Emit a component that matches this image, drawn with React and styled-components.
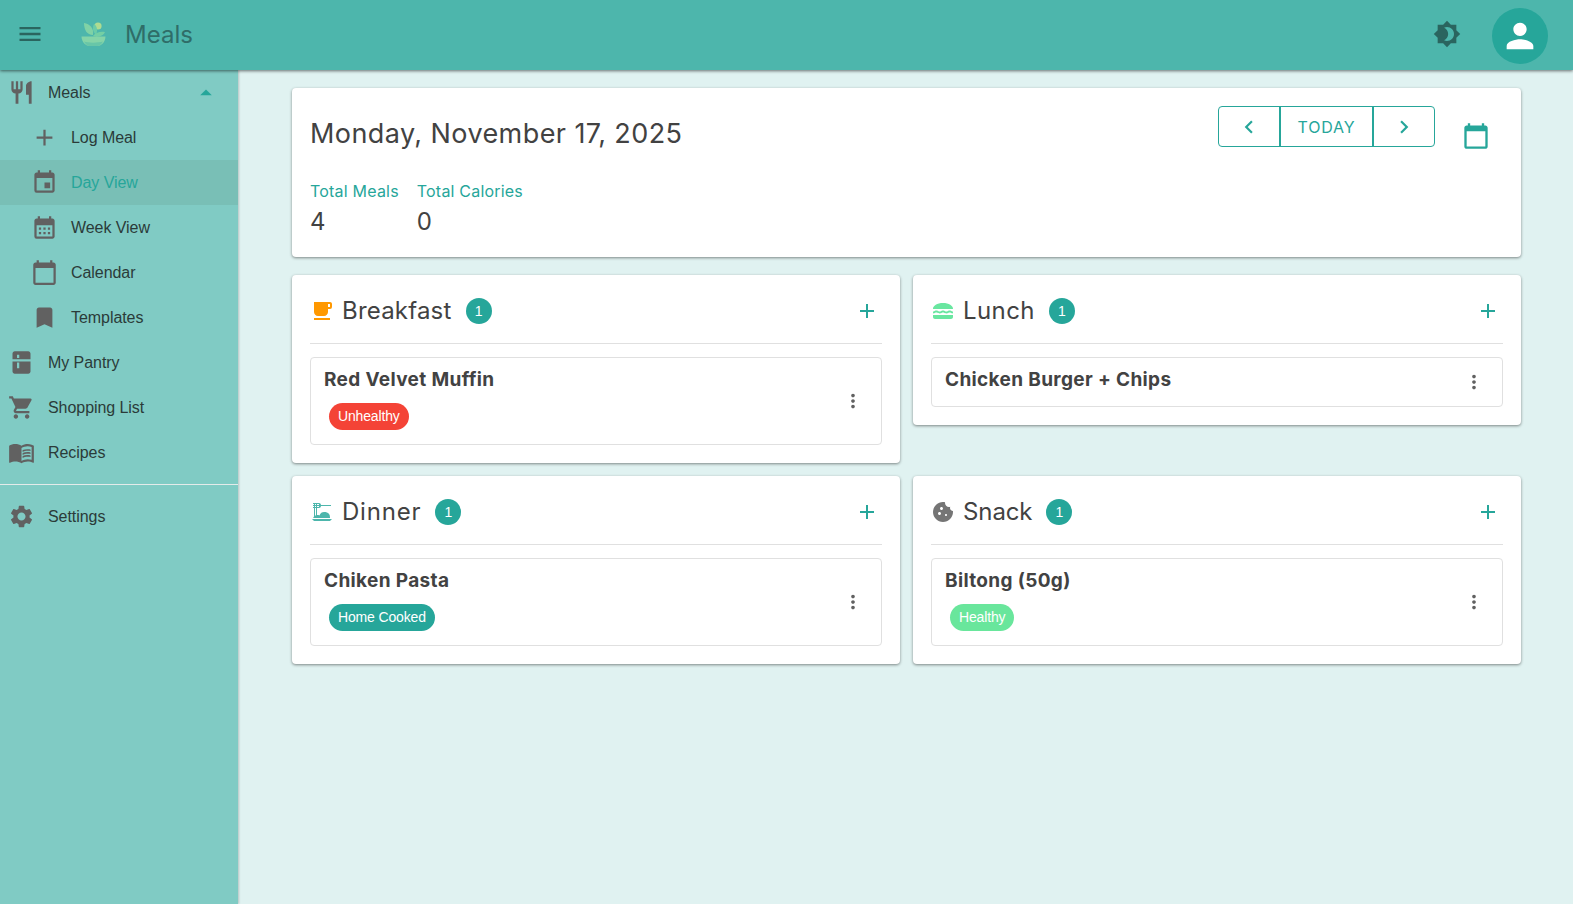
import React from 'react';
import styled, { createGlobalStyle } from 'styled-components';
import {
  MdAdd,
  MdArrowDropUp,
  MdBookmark,
  MdBrightness4,
  MdCalendarMonth,
  MdCalendarToday,
  MdChevronLeft,
  MdChevronRight,
  MdCookie,
  MdDinnerDining,
  MdEvent,
  MdFreeBreakfast,
  MdKitchen,
  MdLunchDining,
  MdMenu,
  MdMenuBook,
  MdMoreVert,
  MdPerson,
  MdRestaurant,
  MdSettings,
  MdShoppingCart,
} from 'react-icons/md';

const GlobalStyle = createGlobalStyle`
  html, body {
    margin: 0;
    padding: 0;
    height: 100%;
    overflow: hidden;
  }
  body {
    background: #e0f2f1;
    font-family: 'Liberation Sans', Arial, sans-serif;
  }
`;

const navItems = [
  { label: 'Meals', icon: MdRestaurant, open: true },
  { label: 'Log Meal', icon: MdAdd, sub: true },
  { label: 'Day View', icon: MdEvent, sub: true, active: true },
  { label: 'Week View', icon: MdCalendarMonth, sub: true },
  { label: 'Calendar', icon: MdCalendarToday, sub: true },
  { label: 'Templates', icon: MdBookmark, sub: true },
  { label: 'My Pantry', icon: MdKitchen },
  { label: 'Shopping List', icon: MdShoppingCart },
  { label: 'Recipes', icon: MdMenuBook },
];

const meals = [
  {
    name: 'Breakfast',
    track: 0.2,
    icon: MdFreeBreakfast,
    color: '#ff9800',
    item: 'Red Velvet Muffin',
    tag: 'Unhealthy',
    tagColor: '#f44336',
  },
  { name: 'Lunch', track: 0.4, icon: MdLunchDining, color: '#69e6a0', item: 'Chicken Burger + Chips' },
  {
    name: 'Dinner',
    track: 0.8,
    icon: MdDinnerDining,
    color: '#4db6ac',
    item: 'Chiken Pasta',
    tag: 'Home Cooked',
    tagColor: '#26a69a',
  },
  {
    name: 'Snack',
    track: -0.1,
    icon: MdCookie,
    color: '#757575',
    item: 'Biltong (50g)',
    tag: 'Healthy',
    tagColor: '#69e69c',
  },
];

function Logo() {
  return (
    <LogoMark width='26' height='26' viewBox='0 0 26 26'>
      <circle cx='17' cy='5' r='3.6' fill='#b9e08f' />
      <path d='M13 3c3 2 4 6 2 11-3-3-4-7-2-11z' fill='#6fcfa8' />
      <path d='M3 2c6 1 10 5 9 12C6 14 3 9 3 2z' fill='#86d6a6' />
      <path d='M12 15c2-3 7-5 12-4-1 3-6 6-12 4z' fill='#79d2a4' />
      <path d='M0.5 15.5h24c0 5-4 9.5-8 9.5h-8c-4 0-8-4.5-8-9.5z' fill='#8cd8a8' />
      <path d='M3 20.5c4 1.5 14 1.5 19 0-1.500 2.700-3.500 4.500-5.500 4.500h-8c-2 0-4-1.800-5.500-4.500z' fill='#6cc8a8' />
    </LogoMark>
  );
}

function MealCard({ meal }) {
  const Icon = meal.icon;
  return (
    <Card>
      <CardHeader>
        <CardTitle>
          <Icon size={24} color={meal.color} />
          <MealName $track={meal.track}>{meal.name}</MealName>
          <Count>1</Count>
        </CardTitle>
        <AddButton>
          <MdAdd size={24} />
        </AddButton>
      </CardHeader>
      <Entry>
        <EntryBody>
          <EntryName>{meal.item}</EntryName>
          {meal.tag && <Tag $color={meal.tagColor}>{meal.tag}</Tag>}
        </EntryBody>
        <MoreButton>
          <MdMoreVert size={22} />
        </MoreButton>
      </Entry>
    </Card>
  );
}

export default function App() {
  return (
    <>
      <GlobalStyle />
      <Page>
        <AppBar>
          <BarLeft>
            <MenuButton>
              <MdMenu size={28} />
            </MenuButton>
            <Logo />
            <AppTitle>Meals</AppTitle>
          </BarLeft>
          <BarRight>
            <MdBrightness4 size={28} color='#2a655f' />
            <Avatar>
              <MdPerson size={40} />
            </Avatar>
          </BarRight>
        </AppBar>
        <Body>
          <Sidebar>
            {navItems.map((item) => {
              const Icon = item.icon;
              return (
                <NavRow key={item.label} $sub={item.sub} $active={item.active}>
                  <NavIcon>
                    <Icon size={27} />
                  </NavIcon>
                  <NavLabel>{item.label}</NavLabel>
                  {item.open && (
                    <Caret>
                      <MdArrowDropUp size={28} />
                    </Caret>
                  )}
                </NavRow>
              );
            })}
            <NavDivider />
            <NavRow>
              <NavIcon>
                <MdSettings size={27} />
              </NavIcon>
              <NavLabel>Settings</NavLabel>
            </NavRow>
          </Sidebar>
          <Main>
            <SummaryCard>
              <SummaryTop>
                <DateTitle>Monday, November 17, 2025</DateTitle>
                <Controls>
                  <ButtonGroup>
                    <GroupButton $width={60}>
                      <MdChevronLeft size={26} />
                    </GroupButton>
                    <GroupButton $width={93}>TODAY</GroupButton>
                    <GroupButton $width={62}>
                      <MdChevronRight size={26} />
                    </GroupButton>
                  </ButtonGroup>
                  <PickerIcon>
                    <MdCalendarToday size={28} />
                  </PickerIcon>
                </Controls>
              </SummaryTop>
              <Stats>
                <div>
                  <StatLabel>Total Meals</StatLabel>
                  <StatValue>4</StatValue>
                </div>
                <div>
                  <StatLabel>Total Calories</StatLabel>
                  <StatValue>0</StatValue>
                </div>
              </Stats>
            </SummaryCard>
            <MealGrid>
              {meals.map((meal) => (
                <MealCard key={meal.name} meal={meal} />
              ))}
            </MealGrid>
          </Main>
        </Body>
      </Page>
    </>
  );
}

const Page = styled.div`
  height: 100vh;
  display: flex;
  flex-direction: column;
`;

const AppBar = styled.header`
  height: 70px;
  flex: none;
  display: flex;
  justify-content: space-between;
  align-items: center;
  padding: 0 25px 2px 16px;
  box-sizing: border-box;
  background: #4db6ac;
  box-shadow: 0 1px 3px rgba(0, 0, 0, 0.55);
  position: relative;
  z-index: 2;
`;

const BarLeft = styled.div`
  display: flex;
  align-items: center;
`;

const BarRight = styled.div`
  display: flex;
  align-items: center;
  gap: 31px;
`;

const MenuButton = styled.div`
  display: flex;
  color: #2a655f;
`;

const LogoMark = styled.svg`
  margin-left: 37px;
  opacity: 0.9;
`;

const AppTitle = styled.div`
  margin-left: 18px;
  font-family: Inter, sans-serif;
  font-size: 24px;
  color: #2f6d68;
`;

const Avatar = styled.div`
  width: 56px;
  height: 56px;
  margin-top: 4px;
  border-radius: 50%;
  background: #26a69a;
  color: #fff;
  display: flex;
  align-items: center;
  justify-content: center;
`;

const Body = styled.div`
  flex: 1;
  display: flex;
  min-height: 0;
`;

const Sidebar = styled.nav`
  width: 238px;
  flex: none;
  box-sizing: border-box;
  background: #80cbc4;
  box-shadow: 1px 0 2px rgba(0, 0, 0, 0.2);
  position: relative;
  z-index: 1;
`;

const NavRow = styled.div`
  height: 45px;
  display: flex;
  align-items: center;
  padding-left: ${(p) => (p.$sub ? '31px' : '8px')};
  background: ${(p) => (p.$active ? '#79bfb6' : 'transparent')};
  color: ${(p) => (p.$active ? '#26a69a' : '#2b3b39')};
`;

const NavIcon = styled.div`
  width: 40px;
  display: flex;
  color: #616161;
`;

const NavLabel = styled.span`
  font-size: 16px;
  letter-spacing: -0.06px;
`;

const Caret = styled.div`
  display: flex;
  margin-left: auto;
  margin-right: 18px;
  color: #26a69a;
`;

const NavDivider = styled.div`
  height: 1px;
  margin: 9px 0;
  background: #e4ebea;
`;

const Main = styled.main`
  flex: 1;
  padding: 18px 52px 0 54px;
  display: flex;
  flex-direction: column;
  gap: 18px;
`;

const Card = styled.section`
  background: #fff;
  border-radius: 4px;
  padding: 0 18px 18px;
  box-shadow: 0 1px 3px rgba(0, 0, 0, 0.45);
`;

const SummaryCard = styled(Card)`
  padding: 18px;
  height: 169px;
  box-sizing: border-box;
`;

const SummaryTop = styled.div`
  display: flex;
  justify-content: space-between;
`;

const DateTitle = styled.h1`
  margin: 11px 0 0;
  font-family: Inter, sans-serif;
  font-size: 27px;
  line-height: 34px;
  font-weight: 400;
  letter-spacing: 0.42px;
  color: #424242;
`;

const Controls = styled.div`
  display: flex;
  margin-right: 13px;
`;

const ButtonGroup = styled.div`
  display: flex;
  height: 41px;
  box-sizing: border-box;
  border: 1px solid #26a69a;
  border-radius: 4px;
`;

const GroupButton = styled.div`
  width: ${(p) => p.$width}px;
  box-sizing: border-box;
  display: flex;
  align-items: center;
  justify-content: center;
  font-family: Inter, sans-serif;
  font-size: 16px;
  letter-spacing: 0.8px;
  color: #26a69a;
  & + & {
    border-left: 2px solid #26a69a;
  }
`;

const PickerIcon = styled.div`
  display: flex;
  margin: 16px 0 0 27px;
  height: 28px;
  color: #26a69a;
`;

const Stats = styled.div`
  display: flex;
  gap: 18px;
  margin-top: 30px;
`;

const StatLabel = styled.div`
  font-family: Inter, sans-serif;
  font-size: 16px;
  line-height: 20px;
  letter-spacing: 0.2px;
  color: #26a69a;
`;

const StatValue = styled.div`
  margin-top: 6px;
  font-family: Inter, sans-serif;
  font-size: 24px;
  line-height: 30px;
  color: #424242;
`;

const MealGrid = styled.div`
  display: grid;
  grid-template-columns: 1fr 1fr;
  gap: 13px;
  align-items: start;
`;

const CardHeader = styled.div`
  height: 69px;
  padding-top: 3px;
  box-sizing: border-box;
  display: flex;
  justify-content: space-between;
  align-items: center;
  border-bottom: 1px solid #e0e0e0;
`;

const CardTitle = styled.div`
  display: flex;
  align-items: center;
`;

const MealName = styled.span`
  margin-left: 8px;
  font-family: Inter, sans-serif;
  font-size: 24px;
  letter-spacing: ${(p) => p.$track}px;
  color: #424242;
`;

const Count = styled.span`
  margin-left: 14px;
  width: 26px;
  height: 26px;
  border-radius: 50%;
  background: #26a69a;
  color: #fff;
  font-size: 14px;
  display: flex;
  align-items: center;
  justify-content: center;
`;

const AddButton = styled.div`
  display: flex;
  margin-right: 3px;
  color: #26a69a;
`;

const Entry = styled.div`
  margin-top: 13px;
  padding: 0 17.5px 0 13px;
  display: flex;
  justify-content: space-between;
  align-items: center;
  border: 1px solid #e0e0e0;
  border-radius: 4px;
`;

const EntryBody = styled.div`
  padding: 10px 0 14px;
`;

const EntryName = styled.div`
  font-family: Inter, sans-serif;
  font-size: 19px;
  line-height: 24px;
  font-weight: 700;
  letter-spacing: 0.35px;
  color: #424242;
`;

const Tag = styled.span`
  display: inline-block;
  height: 27px;
  margin: 11px 0 0 5px;
  padding: 0 9px;
  border-radius: 14px;
  background: ${(p) => p.$color};
  color: #fff;
  font-size: 14px;
  letter-spacing: -0.15px;
  line-height: 27px;
`;

const MoreButton = styled.div`
  display: flex;
  color: #616161;
`;
